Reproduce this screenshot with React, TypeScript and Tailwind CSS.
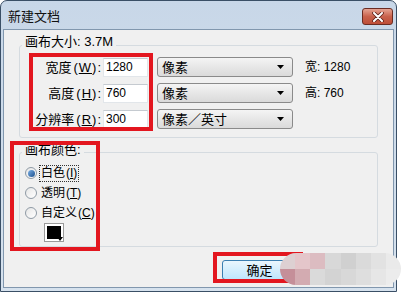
const FONT = "font-['Liberation_Sans','Noto_Sans_CJK_SC',sans-serif]";

function Key({ k, wide }: { k: string; wide?: boolean }) {
  return (
    <span className={wide ? "ml-[2px] tracking-[1px]" : "ml-[1px]"}>
      (<span className="underline">{k}</span>)
    </span>
  );
}

function Select({ label }: { label: string }) {
  return (
    <div className="w-[136px] h-[20px] rounded-[3px] border border-[#8a8a8a] bg-gradient-to-b from-[#f4f4f4] to-[#dadada] flex items-center justify-between pl-[4px] pr-[8px]">
      <span className="text-[13px] leading-none">{label}</span>
      <svg width="7" height="4" viewBox="0 0 7 4">
        <path d="M0 0h7L3.5 4z" fill="#000" />
      </svg>
    </div>
  );
}

function Row({ label, k, value, unit, info }: { label: string; k: string; value: string; unit: string; info?: string }) {
  return (
    <div className="flex items-center h-[20px]">
      <div className="w-[81px] text-right text-[13px] leading-none whitespace-nowrap">
        {label}
        <Key k={k} wide />:
      </div>
      <div className="ml-[2px] w-[45px] h-[19px] bg-white border border-[#e2e6ea] border-t-[#c5cad0] flex items-center px-[2px] text-[12px]">
        {value}
      </div>
      <div className="ml-[9px]">
        <Select label={unit} />
      </div>
      {info && <div className="ml-[12px] text-[12px] whitespace-nowrap">{info}</div>}
    </div>
  );
}

function Radio({ on, children }: { on?: boolean; children: React.ReactNode }) {
  return (
    <div className="flex items-center h-[20px] pl-[5px]">
      <span className="w-[12px] h-[12px] rounded-full border border-[#8f9aa5] bg-gradient-to-br from-[#e6e6e6] to-[#ffffff] flex items-center justify-center">
        {on && <span className="w-[7px] h-[7px] rounded-full bg-gradient-to-br from-[#7db2e8] to-[#1a4f8c]" />}
      </span>
      <span className={`ml-[3px] text-[12px] leading-[15px] px-[1px] ${on ? "outline outline-1 outline-dotted outline-[#333]" : ""}`}>
        {children}
      </span>
    </div>
  );
}

export default function App() {
  const blur = [
    ["#ddd0d2", "#e4c6ca", "#dcbcc1", "#d8d8d8", "#d0d0d0", "#dadada", "#e2e2e2", "#eaeaea"],
    ["#c58f99", "#d3abb1", "#dadada", "#d3d3d3", "#d8d8d8", "#dedede", "#e6e6e6", "#ececec"],
  ];
  return (
    <div className={`relative w-[408px] h-[296px] bg-white overflow-hidden text-black ${FONT}`}>
      <div className="w-[397px] h-[292px] rounded-t-[7px] border border-[#3a4f66] bg-gradient-to-b from-[#c8d7e8] to-[#d6e2ee] flex flex-col">
        <div className="h-[28px] flex items-start justify-between pl-[7px] pr-[3px]">
          <span className="mt-[8px] text-[13px] leading-[16px] text-[#111]">新建文档</span>
          <div className="mt-[7px] w-[31px] h-[17px] rounded-[3px] border border-[#6b2c22] bg-gradient-to-b from-[#e5a393] via-[#c9624c] to-[#bd4d37] flex items-center justify-center">
            <svg width="12" height="10" viewBox="0 0 12 10">
              <path d="M2 1l8 8M10 1L2 9" stroke="#5a2018" strokeWidth="3.6" strokeLinecap="round" />
              <path d="M2 1l8 8M10 1L2 9" stroke="#fff" strokeWidth="2" strokeLinecap="round" />
            </svg>
          </div>
        </div>
        <div className="flex-1 mx-[2px] mb-[3px] border border-[#8197ae] bg-[#f0f0f0] flex flex-col px-[15px]">
          <fieldset className="mt-[8px] border border-[#d5dbe0] rounded-[3px] pt-[5px] pb-[8px]">
            <legend className="ml-[2px] px-[3px] text-[13px] leading-[14px] relative top-[-3px]">
              画布大小: 3.7M
            </legend>
            <div className="flex flex-col gap-[6px]">
              <Row label="宽度" k="W" value="1280" unit="像素" info="宽:  1280" />
              <Row label="高度" k="H" value="760" unit="像素" info="高:  760" />
              <Row label="分辨率" k="R" value="300" unit="像素／英寸" />
            </div>
          </fieldset>
          <fieldset className="mt-[7px] border border-[#d5dbe0] rounded-[3px] pt-[4px] pb-[4px]">
            <legend className="ml-[2px] px-[3px] text-[13px] leading-[14px] relative top-[-2px]">
              画布颜色:
            </legend>
            <Radio on>
              白色<Key k="I" />
            </Radio>
            <Radio>
              透明<Key k="T" />
            </Radio>
            <Radio>
              自定义<Key k="C" />
            </Radio>
            <div className="ml-[24px] w-[20px] h-[19px] border border-[#9a9a9a] bg-white p-[2px] relative">
              <div className="w-full h-full bg-black" />
              <svg className="absolute right-[0px] bottom-[0px]" width="6" height="4" viewBox="0 0 6 4">
                <path d="M0 0h6L3 4z" fill="#000" />
              </svg>
            </div>
          </fieldset>
          <div className="mt-[13px] flex justify-end gap-[6px]">
            <button className="w-[75px] h-[20px] rounded-[3px] border border-[#3c7fb1] bg-gradient-to-b from-[#eaf6fd] to-[#bee6fd] text-[13px] leading-none">
              确定
            </button>
            <button className="w-[75px] h-[20px] rounded-[3px] border border-[#707070] bg-gradient-to-b from-[#f2f2f2] to-[#dddddd] text-[13px] leading-none">
              取消
            </button>
          </div>
        </div>
      </div>

      <div className="absolute left-[29px] top-[53px] w-[124px] h-[78px] border-[4px] border-[#e3161f]" />
      <div className="absolute left-[10px] top-[141px] w-[90px] h-[110px] border-[4px] border-[#e3161f]" />
      <div className="absolute left-[213px] top-[252px] w-[90px] h-[31px] border-[4px] border-[#e3161f]" />

      <div className="absolute left-[280px] top-[253px] w-[121px] h-[32px] rounded-full overflow-hidden grid grid-cols-8 grid-rows-2">
        {blur.flat().map((c, i) => (
          <div key={i} style={{ background: c }} />
        ))}
      </div>
    </div>
  );
}
